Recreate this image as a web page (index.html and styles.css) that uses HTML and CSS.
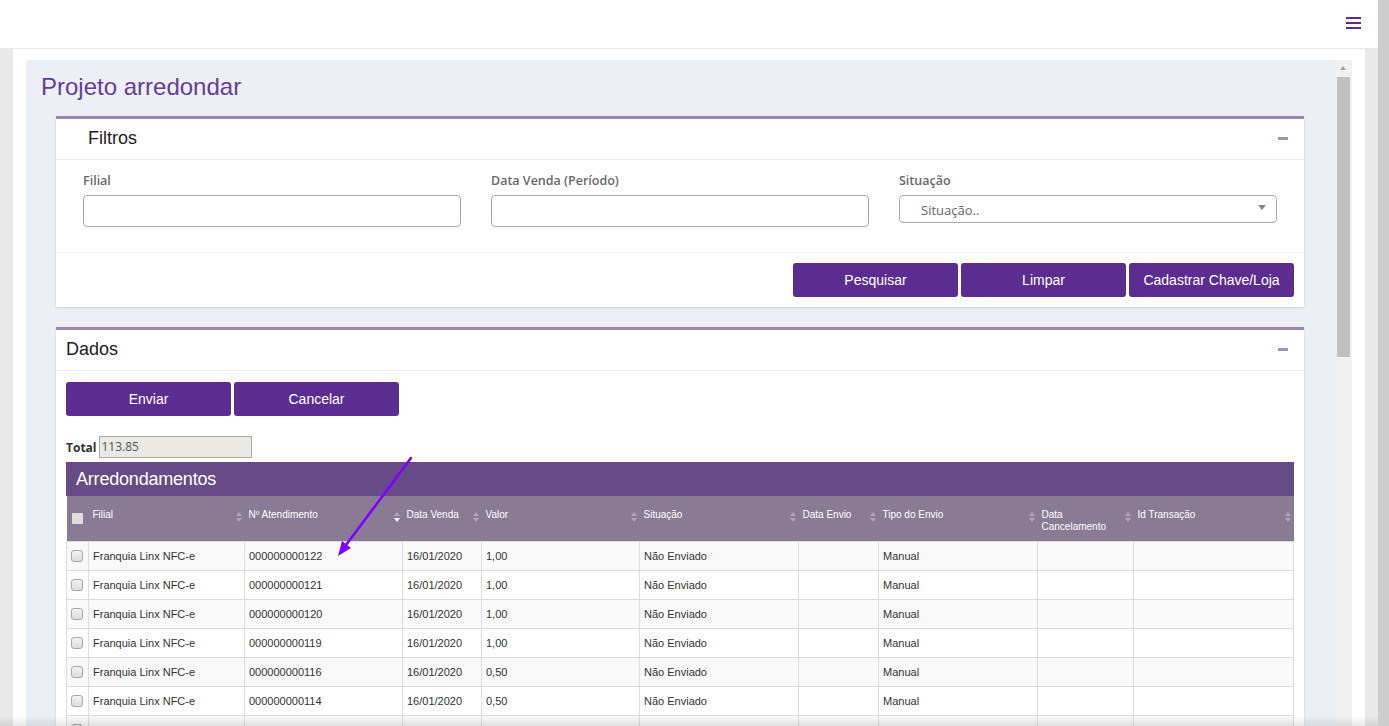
FILE: index.html
```html
<!DOCTYPE html>
<html lang="pt-BR">
<head>
<meta charset="utf-8">
<title>Projeto arredondar</title>
<link rel="stylesheet" href="styles.css">
</head>
<body>
<div class="page">
  <div class="main">
    <header class="topbar">
      <div class="hamburger"><span></span><span></span><span></span></div>
    </header>
    <div class="stage">
      <div class="sheet">
        <div class="frame">
          <div class="content">
            <h1 class="title">Projeto arredondar</h1>

            <section class="panel">
              <div class="panel-head head-filtros">
                <span class="panel-title">Filtros</span>
                <span class="minus"></span>
              </div>
              <div class="filters">
                <div class="field">
                  <label class="label">Filial</label>
                  <div class="input"></div>
                </div>
                <div class="field">
                  <label class="label">Data Venda (Período)</label>
                  <div class="input"></div>
                </div>
                <div class="field">
                  <label class="label">Situação</label>
                  <div class="select"><span class="placeholder">Situação..</span><span class="caret"></span></div>
                </div>
              </div>
              <div class="panel-foot">
                <button class="btn">Pesquisar</button>
                <button class="btn">Limpar</button>
                <button class="btn">Cadastrar Chave/Loja</button>
              </div>
            </section>

            <section class="panel panel-dados">
              <div class="panel-head head-dados">
                <span class="panel-title">Dados</span>
                <span class="minus"></span>
              </div>
              <div class="dados-body">
                <div class="actions">
                  <button class="btn">Enviar</button>
                  <button class="btn">Cancelar</button>
                </div>
                <div class="total-row">
                  <span class="total-label">Total</span>
                  <div class="total-input">113.85</div>
                </div>
                <div class="grid-title">Arredondamentos</div>
                <table class="grid">
                  <colgroup>
                    <col class="c0"><col class="c1"><col class="c2"><col class="c3"><col class="c4"><col class="c5"><col class="c6"><col class="c7"><col class="c8"><col class="c9">
                  </colgroup>
                  <thead>
                    <tr>
                      <th class="th-check"><span class="hcheck"></span></th>
                      <th>Filial<span class="sort"></span></th>
                      <th>Nº Atendimento<span class="sort active"></span></th>
                      <th>Data Venda<span class="sort"></span></th>
                      <th>Valor<span class="sort"></span></th>
                      <th>Situação<span class="sort"></span></th>
                      <th>Data Envio<span class="sort"></span></th>
                      <th>Tipo do Envio<span class="sort"></span></th>
                      <th>Data<br>Cancelamento<span class="sort"></span></th>
                      <th>Id Transação<span class="sort"></span></th>
                    </tr>
                  </thead>
                  <tbody>
                    <tr><td class="td-check"><span class="check"></span></td><td>Franquia Linx NFC-e</td><td>000000000122</td><td>16/01/2020</td><td>1,00</td><td>Não Enviado</td><td></td><td>Manual</td><td></td><td></td></tr>
                    <tr><td class="td-check"><span class="check"></span></td><td>Franquia Linx NFC-e</td><td>000000000121</td><td>16/01/2020</td><td>1,00</td><td>Não Enviado</td><td></td><td>Manual</td><td></td><td></td></tr>
                    <tr><td class="td-check"><span class="check"></span></td><td>Franquia Linx NFC-e</td><td>000000000120</td><td>16/01/2020</td><td>1,00</td><td>Não Enviado</td><td></td><td>Manual</td><td></td><td></td></tr>
                    <tr><td class="td-check"><span class="check"></span></td><td>Franquia Linx NFC-e</td><td>000000000119</td><td>16/01/2020</td><td>1,00</td><td>Não Enviado</td><td></td><td>Manual</td><td></td><td></td></tr>
                    <tr><td class="td-check"><span class="check"></span></td><td>Franquia Linx NFC-e</td><td>000000000116</td><td>16/01/2020</td><td>0,50</td><td>Não Enviado</td><td></td><td>Manual</td><td></td><td></td></tr>
                    <tr><td class="td-check"><span class="check"></span></td><td>Franquia Linx NFC-e</td><td>000000000114</td><td>16/01/2020</td><td>0,50</td><td>Não Enviado</td><td></td><td>Manual</td><td></td><td></td></tr>
                    <tr><td class="td-check"><span class="check"></span></td><td>Franquia Linx NFC-e</td><td>000000000113</td><td>16/01/2020</td><td>0,50</td><td>Não Enviado</td><td></td><td>Manual</td><td></td><td></td></tr>
                  </tbody>
                </table>
              </div>
            </section>
          </div>
          <div class="iscroll">
            <span class="iscroll-up"></span>
            <span class="iscroll-thumb"></span>
          </div>
        </div>
      </div>
    </div>
  </div>
  <div class="vscroll"></div>
</div>
<div class="bottom-shade"></div>
<svg class="annot" width="1389" height="726" viewBox="0 0 1389 726" aria-hidden="true">
  <line x1="411" y1="458" x2="346" y2="545" stroke="#7f00ff" stroke-width="2.6" stroke-linecap="round"/>
  <polygon points="338,556 351,548 342,541" fill="#7f00ff"/>
</svg>
</body>
</html>
```

FILE: styles.css
```css
* { box-sizing: border-box; }

html, body {
  margin: 0;
  height: 100%;
  overflow: hidden;
}

body {
  font-family: "Liberation Sans", Arial, sans-serif;
  color: #333;
  background: #fff;
}

.page {
  display: flex;
  height: 726px;
}

.main {
  flex: 1;
  display: flex;
  flex-direction: column;
  min-width: 0;
}

.vscroll {
  width: 11px;
  background: #cdcdcd;
}

.topbar {
  height: 49px;
  flex: none;
  background: #fff;
  border-bottom: 1px solid #e7e7e7;
  display: flex;
  justify-content: flex-end;
  align-items: flex-start;
  padding: 17px 17px 0 0;
}

.hamburger {
  width: 15px;
  display: flex;
  flex-direction: column;
  gap: 3px;
}

.hamburger span {
  display: block;
  height: 2px;
  background: #5c2d91;
}

.stage {
  flex: 1;
  display: flex;
  background: #e9e9e9;
  padding: 0 15px 0 13px;
  min-height: 0;
}

.sheet {
  flex: 1;
  background: #fff;
  padding: 11px 13px 0 13px;
  display: flex;
  min-height: 0;
}

.frame {
  flex: 1;
  display: flex;
  background: #eceff4;
  overflow: hidden;
}

.content {
  flex: 1;
  padding: 13px 16px 0 15px;
  min-width: 0;
}

.title {
  margin: 0 0 15px 0;
  font-size: 24px;
  line-height: 28px;
  font-weight: normal;
  color: #663d99;
}

.panel {
  margin: 0 15px;
  background: #fff;
  border-top: 3px solid #9d87a6;
  box-shadow: 0 1px 2px rgba(0, 0, 0, 0.12);
}

.panel-dados {
  margin-top: 20px;
}

.panel-head {
  height: 41px;
  border-bottom: 1px solid #eeeeee;
  display: flex;
  align-items: center;
  justify-content: space-between;
  padding-right: 16px;
  padding-bottom: 2px;
}

.head-filtros { padding-left: 32px; }
.head-dados { padding-left: 10px; }

.panel-title {
  font-size: 18px;
  color: #222;
}

.minus {
  width: 10px;
  height: 3px;
  background: #8f9bb2;
}

.filters {
  display: grid;
  grid-template-columns: repeat(3, 1fr);
  column-gap: 30px;
  padding: 12px 27px 25px 27px;
}

.label {
  display: block;
  font-family: "Open Sans", "Liberation Sans", sans-serif;
  font-weight: 600;
  font-size: 12.5px;
  line-height: 18px;
  color: #676a6c;
  margin-bottom: 5px;
}

.input {
  height: 32px;
  border: 1px solid #a9a9a9;
  border-radius: 4px;
  background: #fff;
}

.select {
  height: 28px;
  border: 1px solid #aaa;
  border-radius: 4px;
  background: #fff;
  display: flex;
  align-items: flex-end;
  justify-content: space-between;
  padding: 0 10px 3px 21px;
}

.placeholder {
  font-family: "Open Sans", "Liberation Sans", sans-serif;
  font-size: 13px;
  line-height: 17px;
  color: #666;
}

.caret {
  width: 0;
  height: 0;
  border-left: 4px solid transparent;
  border-right: 4px solid transparent;
  border-top: 5px solid #888;
  margin-bottom: 9px;
}

.panel-foot {
  border-top: 1px solid #f0f0f0;
  padding: 10px;
  display: flex;
  justify-content: flex-end;
  gap: 3px;
}

.btn {
  width: 165px;
  height: 34px;
  border: 0;
  border-radius: 3px;
  background: #5c2d91;
  color: #fff;
  font-family: "Liberation Sans", Arial, sans-serif;
  font-size: 14px;
  padding: 0;
  cursor: pointer;
}

.dados-body {
  padding: 11px 10px 10px 10px;
}

.actions {
  display: flex;
  gap: 3px;
}

.total-row {
  margin-top: 20px;
  display: flex;
  align-items: center;
  gap: 2px;
  height: 22px;
}

.total-label {
  font-family: "Open Sans", "Liberation Sans", sans-serif;
  font-weight: 700;
  font-size: 12px;
  color: #333;
}

.total-input {
  width: 153px;
  height: 22px;
  border: 1px solid #aaa;
  background: #ebe9e3;
  font-family: "Open Sans", "Liberation Sans", sans-serif;
  font-size: 12px;
  line-height: 20px;
  color: #555;
  padding-left: 2px;
}

.grid-title {
  margin-top: 4px;
  height: 34px;
  background: #664b86;
  color: #fff;
  font-size: 18px;
  letter-spacing: -0.2px;
  line-height: 34px;
  padding-left: 10px;
}

.grid {
  width: 100%;
  table-layout: fixed;
  border-collapse: collapse;
}

.c0 { width: 22px; }
.c1 { width: 156px; }
.c2 { width: 158px; }
.c3 { width: 79px; }
.c4 { width: 158px; }
.c5 { width: 159px; }
.c6 { width: 80px; }
.c7 { width: 159px; }
.c8 { width: 96px; }
.c9 { width: 160px; }

.grid th {
  position: relative;
  height: 45px;
  background: #8a7b95;
  color: #fff;
  font-size: 10px;
  font-weight: normal;
  line-height: 12px;
  text-align: left;
  vertical-align: top;
  padding: 13px 12px 0 4px;
}

.grid .th-check {
  padding: 17px 0 0 5px;
}

.hcheck {
  display: block;
  width: 11px;
  height: 11px;
  background: #dedede;
  border-radius: 1px;
}

.sort {
  position: absolute;
  right: 2px;
  top: 16px;
  width: 7px;
  height: 10px;
}

.sort::before,
.sort::after {
  content: "";
  position: absolute;
  left: 0;
  width: 0;
  height: 0;
  border-left: 3.5px solid transparent;
  border-right: 3.5px solid transparent;
}

.sort::before {
  top: 0;
  border-bottom: 4px solid #b0a5ba;
}

.sort::after {
  bottom: 0;
  border-top: 4px solid #b0a5ba;
}

.sort.active::after {
  border-top-color: #fff;
}

.grid td {
  height: 29px;
  border: 1px solid #dddddd;
  padding: 0 4px;
  font-size: 11px;
  color: #333;
  white-space: nowrap;
  overflow: hidden;
}

.grid tbody tr:nth-child(odd) td { background: #f9f9f9; }
.grid tbody tr:nth-child(even) td { background: #fff; }

.grid .td-check {
  padding: 0 0 0 4px;
}

.check {
  display: block;
  width: 12px;
  height: 12px;
  border: 1px solid #a8a8a8;
  border-radius: 3px;
  background: linear-gradient(#f3f3f3, #dcdcdc);
}

.iscroll {
  width: 17px;
  flex: none;
  background: #f1f1f1;
  position: relative;
}

.iscroll-up {
  position: absolute;
  left: 5px;
  top: 6px;
  width: 0;
  height: 0;
  border-left: 3.5px solid transparent;
  border-right: 3.5px solid transparent;
  border-bottom: 4px solid #a3a3a3;
}

.iscroll-thumb {
  position: absolute;
  left: 2px;
  top: 17px;
  width: 13px;
  height: 280px;
  background: #c1c1c1;
}

.bottom-shade {
  position: fixed;
  left: 0;
  right: 11px;
  bottom: 0;
  height: 10px;
  background: linear-gradient(rgba(0, 0, 0, 0), rgba(0, 0, 0, 0.09));
  pointer-events: none;
}

.annot {
  position: fixed;
  left: 0;
  top: 0;
  pointer-events: none;
}
```
